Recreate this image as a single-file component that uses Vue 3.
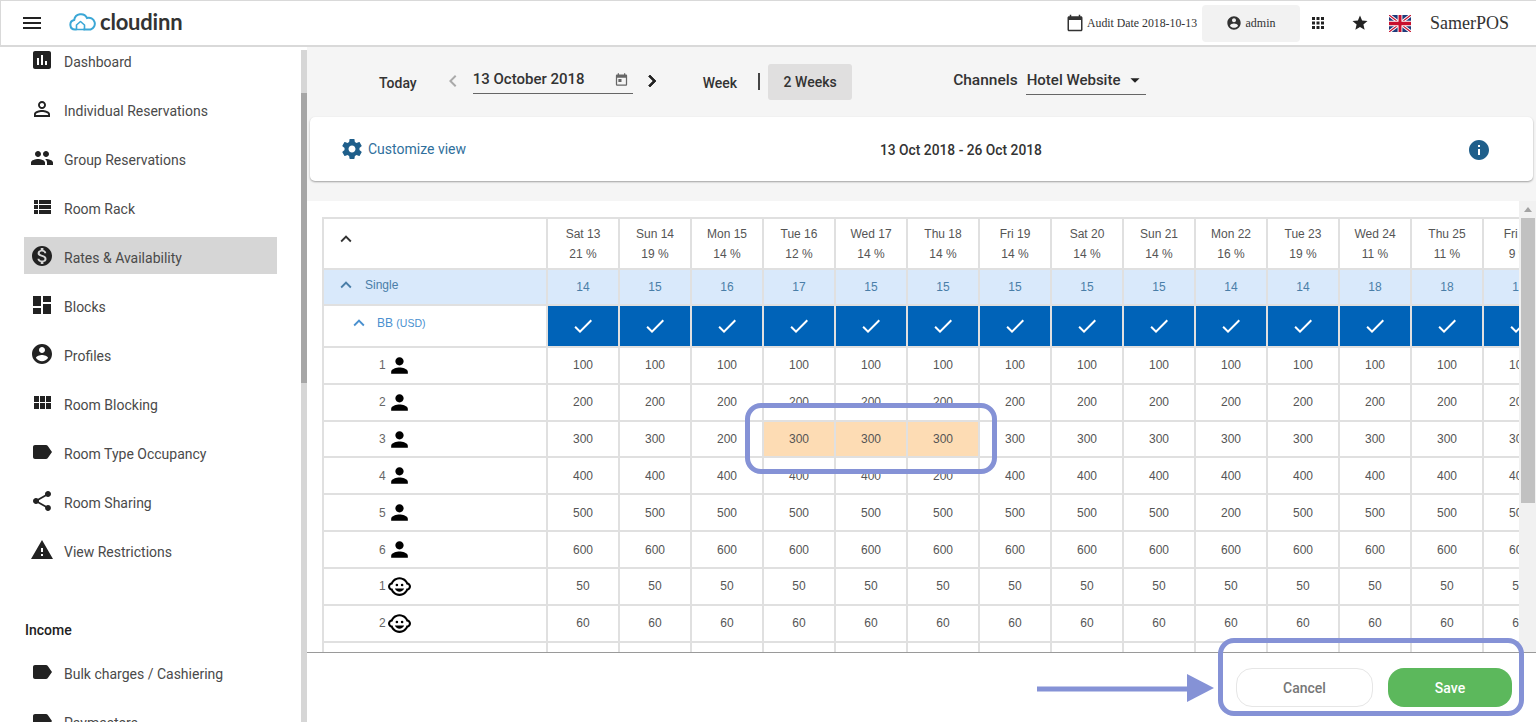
<script setup>
const P = {
  assessment: 'M19 3H5c-1.1 0-2 .9-2 2v14c0 1.1.9 2 2 2h14c1.1 0 2-.9 2-2V5c0-1.1-.9-2-2-2zM9 17H7v-7h2v7zm4 0h-2V7h2v10zm4 0h-2v-4h2v4z',
  personOutline: 'M12 5.9c1.16 0 2.1.94 2.1 2.1s-.94 2.1-2.1 2.1S9.9 9.16 9.9 8s.94-2.1 2.1-2.1m0 9c2.97 0 6.1 1.46 6.1 2.1v1.1H5.9V17c0-.64 3.13-2.1 6.1-2.1M12 4C9.79 4 8 5.79 8 8s1.79 4 4 4 4-1.79 4-4-1.79-4-4-4zm0 9c-2.67 0-8 1.34-8 4v3h16v-3c0-2.66-5.33-4-8-4z',
  group: 'M16 11c1.66 0 2.99-1.34 2.99-3S17.66 5 16 5c-1.66 0-3 1.34-3 3s1.34 3 3 3zm-8 0c1.66 0 2.99-1.34 2.99-3S9.66 5 8 5C6.34 5 5 6.34 5 8s1.34 3 3 3zm0 2c-2.33 0-7 1.17-7 3.5V19h14v-2.5c0-2.33-4.67-3.5-7-3.5zm8 0c-.29 0-.62.02-.97.05 1.16.84 1.97 1.97 1.97 3.45V19h6v-2.5c0-2.33-4.67-3.5-7-3.5z',
  list: 'M4 14h4v-4H4v4zm0 5h4v-4H4v4zM4 9h4V5H4v4zm5 5h12v-4H9v4zm0 5h12v-4H9v4zM9 5v4h12V5H9z',
  money: 'M12 2C6.48 2 2 6.48 2 12s4.48 10 10 10 10-4.48 10-10S17.52 2 12 2zm1.41 16.09V20h-2.67v-1.93c-1.71-.36-3.16-1.46-3.27-3.4h1.96c.1 1.05.82 1.87 2.65 1.87 1.96 0 2.4-.98 2.4-1.59 0-.83-.44-1.61-2.67-2.14-2.48-.6-4.18-1.62-4.18-3.67 0-1.72 1.39-2.84 3.11-3.21V4h2.67v1.95c1.86.45 2.79 1.86 2.85 3.39H14.3c-.05-1.11-.64-1.87-2.22-1.87-1.5 0-2.4.68-2.4 1.64 0 .84.65 1.39 2.67 1.91s4.18 1.39 4.18 3.91c-.01 1.83-1.38 2.83-3.12 3.16z',
  dashboard: 'M3 13h8V3H3v10zm0 8h8v-6H3v6zm10 0h8V11h-8v10zm0-18v6h8V3h-8z',
  account: 'M12 2C6.48 2 2 6.48 2 12s4.48 10 10 10 10-4.48 10-10S17.52 2 12 2zm0 3c1.66 0 3 1.34 3 3s-1.34 3-3 3-3-1.34-3-3 1.34-3 3-3zm0 14.2c-2.5 0-4.71-1.28-6-3.22.03-1.99 4-3.08 6-3.08 1.99 0 5.97 1.09 6 3.08-1.29 1.94-3.5 3.22-6 3.22z',
  module: 'M4 11h5V5H4v6zm0 7h5v-6H4v6zm6 0h5v-6h-5v6zm6 0h5v-6h-5v6zm-6-7h5V5h-5v6zm6-6v6h5V5h-5z',
  label: 'M17.63 5.84C17.27 5.33 16.67 5 16 5L5 5.01C3.9 5.01 3 5.9 3 7v10c0 1.1.9 1.99 2 1.99L16 19c.67 0 1.27-.33 1.63-.84L22 12l-4.37-6.16z',
  share: 'M18 16.08c-.76 0-1.44.3-1.96.77L8.91 12.7c.05-.23.09-.46.09-.7s-.04-.47-.09-.7l7.05-4.11c.54.5 1.25.81 2.04.81 1.66 0 3-1.34 3-3s-1.34-3-3-3-3 1.34-3 3c0 .24.04.47.09.7L8.04 9.81C7.5 9.31 6.79 9 6 9c-1.66 0-3 1.34-3 3s1.34 3 3 3c.79 0 1.5-.31 2.04-.81l7.12 4.16c-.05.21-.08.43-.08.65 0 1.61 1.31 2.92 2.92 2.92s2.92-1.31 2.92-2.92-1.31-2.92-2.92-2.92z',
  warning: 'M1 21h22L12 2 1 21zm12-3h-2v-2h2v2zm0-4h-2v-4h2v4z',
  person: 'M12 12c2.21 0 4-1.79 4-4s-1.79-4-4-4-4 1.79-4 4 1.79 4 4 4zm0 2c-2.67 0-8 1.34-8 4v2h16v-2c0-2.66-5.33-4-8-4z',
  child: 'M22.94 12.66c.04-.21.06-.43.06-.66s-.02-.45-.06-.66c-.25-1.51-1.36-2.74-2.81-3.17-.53-1.12-1.28-2.1-2.19-2.91C16.36 3.85 14.28 3 12 3s-4.36.85-5.94 2.26c-.92.81-1.67 1.8-2.19 2.91-1.45.43-2.56 1.65-2.81 3.17-.04.21-.06.43-.06.66s.02.45.06.66c.25 1.51 1.36 2.74 2.81 3.17.52 1.11 1.27 2.09 2.17 2.89C7.62 20.14 9.71 21 12 21s4.38-.86 5.97-2.28c.9-.8 1.65-1.79 2.17-2.89 1.44-.43 2.55-1.65 2.8-3.17zM19 14c-.1 0-.19-.02-.29-.03-.2.67-.49 1.29-.86 1.86C16.6 17.74 14.45 19 12 19s-4.6-1.26-5.85-3.17c-.37-.57-.66-1.19-.86-1.86-.1.01-.19.03-.29.03-1.1 0-2-.9-2-2s.9-2 2-2c.1 0 .19.02.29.03.2-.67.49-1.29.86-1.86C7.4 6.26 9.55 5 12 5s4.6 1.26 5.85 3.17c.37.57.66 1.19.86 1.86.1-.01.19-.03.29-.03 1.1 0 2 .9 2 2s-.9 2-2 2zM7.5 14c.76 1.77 2.49 3 4.5 3s3.74-1.23 4.5-3h-9zM9.5 9.25a1.25 1.25 0 1 0 0 2.5 1.25 1.25 0 0 0 0-2.5zM14.5 9.25a1.25 1.25 0 1 0 0 2.5 1.25 1.25 0 0 0 0-2.5z',
  gear: 'M19.43 12.98c.04-.32.07-.64.07-.98s-.03-.66-.07-.98l2.11-1.65c.19-.15.24-.42.12-.64l-2-3.46c-.12-.22-.39-.3-.61-.22l-2.49 1c-.52-.4-1.08-.73-1.69-.98l-.38-2.65C14.46 2.18 14.25 2 14 2h-4c-.25 0-.46.18-.49.42l-.38 2.65c-.61.25-1.17.59-1.69.98l-2.49-1c-.23-.09-.49 0-.61.22l-2 3.46c-.13.22-.07.49.12.64l2.11 1.65c-.04.32-.07.65-.07.98s.03.66.07.98l-2.11 1.65c-.19.15-.24.42-.12.64l2 3.46c.12.22.39.3.61.22l2.49-1c.52.4 1.08.73 1.69.98l.38 2.65c.03.24.24.42.49.42h4c.25 0 .46-.18.49-.42l.38-2.65c.61-.25 1.17-.59 1.69-.98l2.49 1c.23.09.49 0 .61-.22l2-3.46c.12-.22.07-.49-.12-.64l-2.11-1.65zM12 15.5c-1.93 0-3.5-1.57-3.5-3.5s1.57-3.5 3.5-3.5 3.5 1.57 3.5 3.5-1.57 3.5-3.5 3.5z',
  info: 'M12 2C6.48 2 2 6.48 2 12s4.48 10 10 10 10-4.48 10-10S17.52 2 12 2zm1 15h-2v-6h2v6zm0-8h-2V7h2v2z',
  calendar: 'M20 3h-1V1h-2v2H7V1H5v2H4c-1.1 0-2 .9-2 2v16c0 1.1.9 2 2 2h16c1.1 0 2-.9 2-2V5c0-1.1-.9-2-2-2zm0 18H4V8h16v13z',
  event: 'M19 4h-1V2h-2v2H8V2H6v2H5c-1.11 0-1.99.9-1.99 2L3 20a2 2 0 0 0 2 2h14c1.1 0 2-.9 2-2V6c0-1.1-.9-2-2-2zm0 16H5V9h14v11zM7 11h5v5H7z',
  apps: 'M4 8h4V4H4v4zm6 12h4v-4h-4v4zm-6 0h4v-4H4v4zm0-6h4v-4H4v4zm6 0h4v-4h-4v4zm6-10v4h4V4h-4zm-6 4h4V4h-4v4zm6 6h4v-4h-4v4zm0 6h4v-4h-4v4z',
  star: 'M12 17.27L18.18 21l-1.64-7.03L22 9.24l-7.19-.61L12 2 9.19 8.63 2 9.24l5.46 4.73L5.82 21z',
  less: 'M12 8l-6 6 1.41 1.41L12 10.83l4.59 4.58L18 14z',
  left: 'M15.41 7.41L14 6l-6 6 6 6 1.41-1.41L10.83 12z',
  right: 'M10 6L8.59 7.41 13.17 12l-4.58 4.59L10 18l6-6z',
  check: 'M9 16.17L4.83 12l-1.42 1.41L9 19 21 7l-1.41-1.41z',
  caret: 'M7 10l5 5 5-5z',
  menu: 'M3 18h18v-2H3v2zm0-5h18v-2H3v2zm0-7v2h18V6H3z'
}

const navMain = [
  ['Dashboard', P.assessment], ['Individual Reservations', P.personOutline], ['Group Reservations', P.group],
  ['Room Rack', P.list], ['Rates & Availability', P.money, true], ['Blocks', P.dashboard], ['Profiles', P.account],
  ['Room Blocking', P.module], ['Room Type Occupancy', P.label], ['Room Sharing', P.share], ['View Restrictions', P.warning]
]
const navIncome = [['Bulk charges / Cashiering', P.label], ['Paymasters', P.label]]

const days = [
  ['Sat 13', 21, 14], ['Sun 14', 19, 15], ['Mon 15', 14, 16], ['Tue 16', 12, 17], ['Wed 17', 14, 15], ['Thu 18', 14, 15],
  ['Fri 19', 14, 15], ['Sat 20', 14, 15], ['Sun 21', 14, 15], ['Mon 22', 16, 14], ['Tue 23', 19, 14], ['Wed 24', 11, 18],
  ['Thu 25', 11, 18], ['Fri 26', 9, 18]
]
const fill = (v, over = {}) => days.map((_, i) => over[i] ?? v)
const rows = [
  { n: 1, icon: P.person, vals: fill(100) },
  { n: 2, icon: P.person, vals: fill(200) },
  { n: 3, icon: P.person, vals: fill(300, { 2: 200 }), hot: [3, 4, 5] },
  { n: 4, icon: P.person, vals: fill(400, { 5: 200 }) },
  { n: 5, icon: P.person, vals: fill(500, { 9: 200 }) },
  { n: 6, icon: P.person, vals: fill(600) },
  { n: 1, icon: P.child, vals: fill(50) },
  { n: 2, icon: P.child, vals: fill(60) },
  { n: '', icon: P.person, vals: fill('') }
]
</script>

<template>
  <div class="page">
    <header class="topbar">
      <svg class="ic menu" viewBox="0 0 24 24"><path :d="P.menu" /></svg>
      <div class="logo">
        <svg class="cloud" viewBox="0 0 28 19">
          <path d="M7 17.5H6a4.8 4.8 0 0 1-.8-9.5A6.8 6.8 0 0 1 18 6a5.8 5.8 0 0 1 3.6 11.5H15" fill="none" stroke="#3ba7d6" stroke-width="2" stroke-linecap="round" />
          <path d="M7.5 13l4-3.5 4 3.5v4.500h-8z" fill="none" stroke="#3ba7d6" stroke-width="1.600" stroke-linejoin="round" />
        </svg>
        <span class="logotext">cloudinn</span>
      </div>
      <div class="top-right">
        <svg class="ic cal" viewBox="0 0 24 24"><path :d="P.calendar" /></svg>
        <span class="audit">Audit Date 2018-10-13</span>
        <div class="userbox">
          <svg class="ic user" viewBox="0 0 24 24"><path :d="P.account" /></svg>
          <span>admin</span>
        </div>
        <svg class="ic apps" viewBox="0 0 24 24"><path :d="P.apps" /></svg>
        <svg class="ic star" viewBox="0 0 24 24"><path :d="P.star" /></svg>
        <svg class="flag" viewBox="0 0 60 40" preserveAspectRatio="none">
          <rect width="60" height="40" fill="#1f3a7a" />
          <path d="M0 0L60 40M60 0L0 40" stroke="#fff" stroke-width="8" />
          <path d="M0 0L60 40M60 0L0 40" stroke="#c8102e" stroke-width="3" />
          <path d="M30 0V40M0 20H60" stroke="#fff" stroke-width="13" />
          <path d="M30 0V40M0 20H60" stroke="#c8102e" stroke-width="8" />
        </svg>
        <span class="pos">SamerPOS</span>
      </div>
    </header>

    <div class="body">
      <aside class="side">
        <nav class="nav">
          <a v-for="it in navMain" :key="it[0]" class="nav-item" :class="{ active: it[2] }">
            <svg class="ic nav-ic" viewBox="0 0 24 24"><path :d="it[1]" /></svg>
            <span>{{ it[0] }}</span>
          </a>
          <div class="nav-head">Income</div>
          <a v-for="it in navIncome" :key="it[0]" class="nav-item">
            <svg class="ic nav-ic" viewBox="0 0 24 24"><path :d="it[1]" /></svg>
            <span>{{ it[0] }}</span>
          </a>
        </nav>
        <div class="side-scroll"><div class="side-thumb"></div></div>
      </aside>

      <main class="main">
        <div class="toolbar">
          <span class="today">Today</span>
          <svg class="ic chev-l" viewBox="0 0 24 24"><path :d="P.left" /></svg>
          <div class="datefield">
            <span>13 October 2018</span>
            <svg class="ic ev" viewBox="0 0 24 24"><path :d="P.event" /></svg>
          </div>
          <svg class="ic chev-r" viewBox="0 0 24 24"><path :d="P.right" /></svg>
          <span class="week">Week</span>
          <span class="sep"></span>
          <span class="weeks2">2 Weeks</span>
          <span class="chan">Channels</span>
          <div class="chan-sel">
            <span>Hotel Website</span>
            <svg class="ic caret" viewBox="0 0 24 24"><path :d="P.caret" /></svg>
          </div>
        </div>

        <section class="card">
          <div class="cust">
            <svg class="ic gear" viewBox="0 0 24 24"><path :d="P.gear" /></svg>
            <span>Customize view</span>
          </div>
          <div class="range">13 Oct 2018 - 26 Oct 2018</div>
          <svg class="ic info" viewBox="0 0 24 24"><path :d="P.info" /></svg>
        </section>

        <section class="grid-area">
          <div class="grid-wrap">
            <div class="grid">
              <div class="row r-head">
                <div class="lab"><svg class="ic exp top" viewBox="0 0 24 24"><path :d="P.less" /></svg></div>
                <div v-for="d in days" :key="d[0]" class="cell head">
                  <span>{{ d[0] }}</span><span>{{ d[1] }} %</span>
                </div>
              </div>
              <div class="row r-single">
                <div class="lab single"><svg class="ic exp" viewBox="0 0 24 24"><path :d="P.less" /></svg><span>Single</span></div>
                <div v-for="d in days" :key="d[0]" class="cell">{{ d[2] }}</div>
              </div>
              <div class="row r-bb">
                <div class="lab bb"><svg class="ic exp" viewBox="0 0 24 24"><path :d="P.less" /></svg><span>BB <small>(USD)</small></span></div>
                <div v-for="d in days" :key="d[0]" class="cell chk">
                  <svg class="ic check" viewBox="0 0 24 24"><path :d="P.check" /></svg>
                </div>
              </div>
              <div v-for="(r, ri) in rows" :key="ri" class="row r-val">
                <div class="lab val">
                  <span class="num">{{ r.n }}</span>
                  <svg class="ic pax" viewBox="0 0 24 24"><path :d="r.icon" /></svg>
                </div>
                <div v-for="(v, i) in r.vals" :key="i" class="cell" :class="{ hot: r.hot && r.hot.includes(i) }">{{ v }}</div>
              </div>
            </div>
          </div>
          <div class="vscroll">
            <svg class="vs-up" viewBox="0 0 10 6"><path d="M5 0l5 6H0z" /></svg>
            <div class="vs-thumb"></div>
          </div>
        </section>

        <footer class="foot">
          <button class="btn cancel">Cancel</button>
          <button class="btn save">Save</button>
        </footer>
      </main>
    </div>

    <div class="mark mark-cells"></div>
    <div class="mark mark-foot"></div>
    <svg class="arrow" viewBox="0 0 177 28"><path d="M0 12.500h150v5H0z" /><path d="M150 0l27 14-27 14z" /></svg>
  </div>
</template>

<style>
html, body { margin: 0; padding: 0; overflow: hidden; background: #fff; }
</style>

<style scoped>
.page { position: relative; width: 1536px; height: 722px; overflow: hidden; display: flex; flex-direction: column; font-family: Roboto, "Liberation Sans", sans-serif; color: #444; }
.ic { fill: currentColor; display: block; flex: none; }

.topbar { height: 47px; box-sizing: border-box; flex: none; display: flex; align-items: center; background: #fff; border: 1px solid #d9d9d9; border-bottom-width: 2px; border-right: 0; }
.menu { width: 24px; height: 24px; margin-left: 19px; color: #222; }
.logo { display: flex; align-items: center; margin-left: 25px; margin-top: -3px; }
.cloud { width: 28px; height: 19px; display: block; }
.logotext { font-family: Lato, sans-serif; font-weight: 700; font-size: 22px; color: #333; margin-left: 3px; letter-spacing: -.2px; line-height: 24px; }
.top-right { margin-left: auto; display: flex; align-items: center; font-family: "Liberation Serif", serif; color: #333; }
.cal { width: 18px; height: 18px; margin-right: 3px; color: #333; }
.audit { font-size: 11.800px; width: 116px; white-space: nowrap; }
.userbox { width: 98px; height: 37px; background: #f2f2f2; border-radius: 4px; display: flex; align-items: center; justify-content: center; font-size: 12px; box-sizing: border-box; margin-left: -1px; }
.user { width: 16px; height: 16px; margin-right: 3px; color: #333; }
.apps { width: 18px; height: 18px; margin-left: 9px; color: #222; }
.star { width: 18px; height: 18px; margin-left: 24px; color: #222; }
.flag { width: 22px; height: 17px; margin-left: 20px; display: block; }
.pos { font-size: 18px; margin-left: 19px; margin-right: 27px; }

.body { flex: 1; min-height: 0; display: flex; }
.side { width: 307px; flex: none; display: flex; background: #fff; overflow: hidden; }
.nav { width: 301px; flex: none; margin-top: -6px; font-size: 14px; }
.nav-item { display: flex; align-items: center; box-sizing: border-box; height: 37px; width: 253px; margin: 0 0 12px 24px; padding-left: 6px; color: #4a4a4a; }
.nav-item > span { margin-left: 10px; padding-top: 5px; white-space: nowrap; }
.nav-item.active { background: #d6d6d6; }
.nav-ic { width: 24px; height: 24px; color: #222; }
.nav-head { font-size: 14px; font-weight: 500; color: #222; line-height: 20px; margin: 52px 0 13px 25px; }
.side-scroll { width: 6px; background: #d6d6d6; margin-top: 3px; }
.side-thumb { width: 6px; height: 290px; margin-top: 43px; background: #a6a6a6; }

.main { flex: 1; min-width: 0; display: flex; flex-direction: column; background: #f5f5f5; }
.toolbar { height: 70px; flex: none; display: flex; align-items: center; padding-left: 72px; font-size: 14px; font-weight: 500; color: #333; }
.today { margin-top: 2px; }
.chev-l { width: 24px; height: 24px; margin-left: 24px; color: #aaa; margin-top: -2px; }
.datefield { width: 160px; height: 29px; box-sizing: border-box; margin-left: 8px; border-bottom: 1px solid #666; display: flex; align-items: center; justify-content: space-between; font-size: 15px; margin-top: -6px; }
.ev { width: 15px; height: 15px; margin-right: 4px; color: #666; margin-top: 1px; }
.chev-r { width: 24px; height: 24px; margin-left: 7px; color: #222; margin-top: -2px; stroke: currentColor; stroke-width: .8px; }
.week { margin-left: 39px; margin-top: 2px; }
.sep { width: 2px; height: 17px; background: #444; margin-left: 21px; margin-top: -1px; }
.weeks2 { width: 84px; height: 36px; background: #e0dfdf; border-radius: 3px; margin-left: 8px; display: flex; align-items: center; justify-content: center; }
.chan { margin-left: 101px; font-size: 15.500px; margin-top: -4px; }
.chan-sel { width: 120px; height: 30px; box-sizing: border-box; margin-left: 8px; border-bottom: 1px solid #666; display: flex; align-items: center; justify-content: space-between; font-size: 15px; margin-top: -4px; padding-left: 1px; }
.caret { width: 22px; height: 22px; color: #222; margin-right: 0; }

.card { height: 64px; flex: none; box-sizing: border-box; margin: 0 3px; background: #fff; border-radius: 5px; box-shadow: 0 1px 2px rgba(0,0,0,.35); display: flex; align-items: center; padding: 0 42px 0 31px; position: relative; }
.cust { display: flex; align-items: center; color: #2f6f9c; font-size: 14px; width: 539px; }
.cust > span { margin-top: -1px; margin-left: 4px; }
.gear { width: 24px; height: 24px; color: #1f5f8b; margin-left: -1px; margin-top: -1px; }
.range { font-size: 13.800px; font-weight: 500; color: #333; width: 162px; white-space: nowrap; margin-top: 2px; }
.info { width: 24px; height: 24px; color: #1f5f8b; margin-left: auto; margin-top: 2px; }

.grid-area { margin-top: 20px; flex: 1; min-height: 0; display: flex; background: #fff; position: relative; }
.grid-wrap { flex: 1; min-width: 0; overflow: hidden; padding: 16px 0 0 15px; }
.grid { width: 1234px; border-top: 2px solid #e0e0e0; border-left: 2px solid #e0e0e0; font-family: "Liberation Sans", Arial, sans-serif; font-size: 12px; color: #555; }
.row { display: flex; }
.r-head { height: 51px; }
.r-single { height: 36px; background: #d9e9fb; color: #4a7ea8; }
.r-bb { height: 42px; }
.r-val { height: 36.830px; }
.lab { width: 224px; flex: none; box-sizing: border-box; border-right: 2px solid #e0e0e0; border-bottom: 2px solid #e0e0e0; display: flex; align-items: center; }
.cell { width: 72px; flex: none; box-sizing: border-box; border-right: 2px solid #e0e0e0; border-bottom: 2px solid #e0e0e0; display: flex; align-items: center; justify-content: center; }
.head { flex-direction: column; line-height: 20px; }
.exp { width: 22px; height: 22px; }
.top { margin-left: 11px; color: #333; margin-bottom: 10px; }
.single { padding-left: 11px; padding-bottom: 4px; }
.single > span { margin-left: 8px; }
.bb { padding-left: 24px; color: #4a90cf; padding-bottom: 6px; }
.bb > span { margin-left: 7px; }
.bb small { font-size: 10.500px; }
.chk { background: #0063b8; color: #fff; }
.check { width: 24px; height: 24px; }
.val { padding-left: 55px; }
.num { width: 7px; color: #666; }
.pax { width: 25px; height: 25px; color: #000; margin-left: 1px; }
.hot { background: #fddcb4; }
.vscroll { width: 17px; flex: none; background: #f1f1f1; position: relative; }
.vs-up { display: block; width: 8px; height: 5px; margin: 6px auto 0; fill: #a3a3a3; }
.vs-thumb { width: 14px; height: 285px; margin: 6px 0 0 2px; background: #c1c1c1; }

.foot { height: 70px; flex: none; box-sizing: border-box; background: #fff; border-top: 1px solid #9a9a9a; display: flex; align-items: center; justify-content: flex-end; gap: 15px; padding-right: 24px; }
.btn { height: 39px; border-radius: 16px; font-family: Roboto, sans-serif; font-size: 14px; font-weight: 500; box-sizing: border-box; padding: 0; }
.cancel { width: 137px; background: #fff; border: 1px solid #e6e6e6; color: #777; }
.save { width: 124px; background: #5cb85c; border: 0; color: #fff; }

.mark { position: absolute; box-sizing: border-box; border: 5px solid #8592d6; border-radius: 16px; pointer-events: none; }
.mark-cells { left: 745px; top: 403px; width: 252px; height: 71px; }
.mark-foot { left: 1218px; top: 638px; width: 306px; height: 78px; }
.arrow { position: absolute; left: 1037px; top: 674px; width: 177px; height: 28px; fill: #8592d6; }
</style>
